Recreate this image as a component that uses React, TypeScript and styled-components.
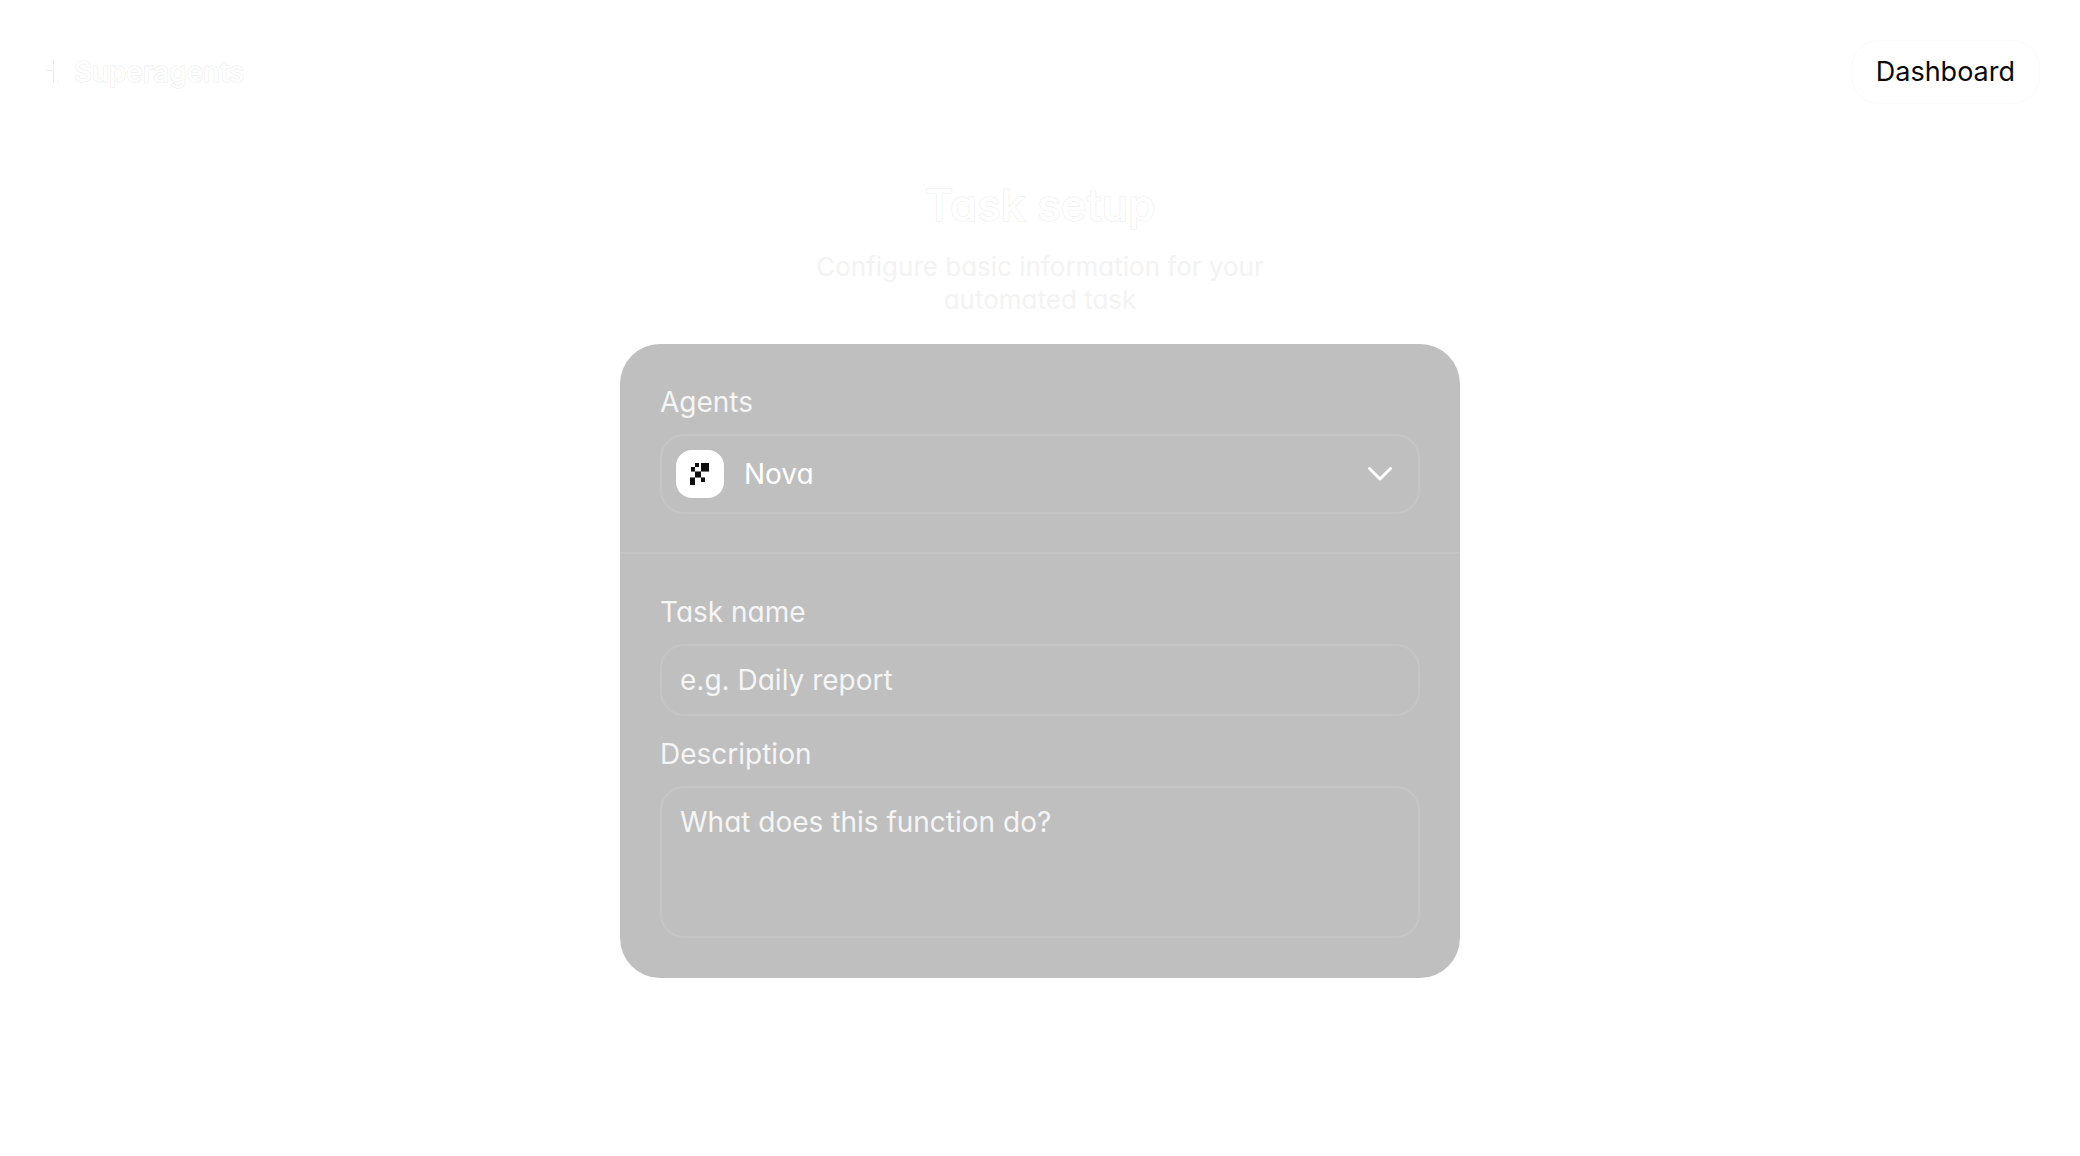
import React from "react";
import styled, { createGlobalStyle } from "styled-components";

const GlobalStyle = createGlobalStyle`
  *, *::before, *::after { box-sizing: border-box; }
  body {
    margin: 0;
    background: #ffffff;
    font-family: Inter, "Liberation Sans", sans-serif;
    font-size: 28px;
    line-height: 36px;
    -webkit-font-smoothing: antialiased;
  }
  input, select, textarea, button { font: inherit; }
`;

const Page = styled.div`
  display: flex;
  flex-direction: column;
  min-height: 100vh;
`;

const Header = styled.header`
  display: flex;
  align-items: center;
  justify-content: space-between;
  padding: 40px 40px 0;
`;

const Brand = styled.a`
  display: flex;
  align-items: center;
  gap: 12px;
  color: #ffffff;
  font-size: 28px;
  font-weight: 500;
  text-decoration: none;
  -webkit-text-stroke: 1px #ebebeb;
  paint-order: stroke fill;
`;

const DashboardButton = styled.button`
  height: 64px;
  padding: 0 24px;
  border: 1px solid #fbfbfb;
  border-radius: 28px;
  background: #ffffff;
  color: #0a0a0a;
  font-size: 27px;
  cursor: pointer;
`;

const Main = styled.main`
  display: flex;
  flex-direction: column;
  align-items: center;
  padding: 72px 40px 40px;
  font-feature-settings: "cv11";
`;

const Title = styled.h1`
  margin: 0;
  color: #ffffff;
  font-size: 44px;
  line-height: 58px;
  font-weight: 500;
  -webkit-text-stroke: 1px #ebebeb;
  paint-order: stroke fill;
`;

const Subtitle = styled.p`
  max-width: 480px;
  margin: 16px 0 28px;
  color: #f3f3f3;
  font-size: 26px;
  line-height: 33px;
  text-align: center;
`;

const Card = styled.form`
  width: 100%;
  max-width: 840px;
  border-radius: 40px;
  background: #bfbfbf;
`;

const Section = styled.section<{ $divided?: boolean }>`
  display: flex;
  flex-direction: column;
  gap: 20px;
  padding: 40px;
  ${(p) => p.$divided && "padding-bottom: 38px; border-bottom: 2px solid #c5c5c5;"}
`;

const Field = styled.div`
  display: flex;
  flex-direction: column;
  gap: 14px;
`;

const Label = styled.label`
  color: #f5f5f5;
`;

const SelectBox = styled.div`
  display: flex;
  align-items: center;
  gap: 16px;
  height: 80px;
  padding: 0 22px 0 14px;
  border: 2px solid #c5c5c5;
  border-radius: 24px;
`;

const Avatar = styled.span`
  display: grid;
  place-items: center;
  width: 48px;
  height: 48px;
  border-radius: 16px;
  background: #ffffff;
`;

const Select = styled.select`
  flex: 1;
  min-width: 0;
  height: 48px;
  padding: 0 4px;
  border: 0;
  outline: 0;
  appearance: none;
  background: transparent;
  color: #ffffff;
  font-feature-settings: "cv11";
`;

const TextInput = styled.input`
  width: 100%;
  height: 72px;
  padding: 0 18px;
  border: 2px solid #c5c5c5;
  border-radius: 24px;
  outline: 0;
  background: transparent;
  color: #ffffff;
  font-feature-settings: "cv11";
  &::placeholder { color: #f5f5f5; opacity: 1; }
`;

const TextArea = styled.textarea`
  display: block;
  width: 100%;
  height: 152px;
  padding: 16px 18px;
  border: 2px solid #c5c5c5;
  border-radius: 24px;
  outline: 0;
  resize: none;
  background: transparent;
  color: #ffffff;
  font-feature-settings: "cv11";
  &::placeholder { color: #f5f5f5; opacity: 1; }
`;

const BrandMark = () => (
  <svg width="22" height="24" viewBox="0 0 22 24" fill="none" stroke="#ececec" aria-hidden="true">
    <path d="M13.5 0v23M6 10.500h7" />
    <path d="M18.5 19v3.5h-2" stroke="#f6f6f6" />
  </svg>
);

const AgentMark = () => (
  <svg width="20" height="22" viewBox="0 0 20 22" fill="#0c0c0c" shapeRendering="crispEdges" aria-hidden="true">
    <path d="M5 0h4v4H5zM11 0h8v8h-8zM1 4h4v4H1zM5 9h6v5H5zM0 15h5v7H0zM11 15h4v4h-4z" />
    <path d="M1 8h18v1H1zM0 14h15v1H0z" fill="#777777" />
  </svg>
);

const Chevron = () => (
  <svg width="32" height="32" viewBox="0 0 32 32" fill="none" stroke="#ffffff" strokeWidth="3" strokeLinecap="round" strokeLinejoin="round" aria-hidden="true">
    <path d="M5.500 10.500 16 21 26.500 10.500" />
  </svg>
);

export default function App() {
  return (
    <Page>
      <GlobalStyle />
      <Header>
        <Brand href="#">
          <BrandMark />
          Superagents
        </Brand>
        <DashboardButton type="button">Dashboard</DashboardButton>
      </Header>
      <Main>
        <Title>Task setup</Title>
        <Subtitle>Configure basic information for your automated task</Subtitle>
        <Card>
          <Section $divided>
            <Field>
              <Label htmlFor="agent">Agents</Label>
              <SelectBox>
                <Avatar>
                  <AgentMark />
                </Avatar>
                <Select id="agent" defaultValue="nova">
                  <option value="nova">Nova</option>
                </Select>
                <Chevron />
              </SelectBox>
            </Field>
          </Section>
          <Section>
            <Field>
              <Label htmlFor="task-name">Task name</Label>
              <TextInput id="task-name" type="text" placeholder="e.g. Daily report" />
            </Field>
            <Field>
              <Label htmlFor="description">Description</Label>
              <TextArea id="description" placeholder="What does this function do?" />
            </Field>
          </Section>
        </Card>
      </Main>
    </Page>
  );
}
